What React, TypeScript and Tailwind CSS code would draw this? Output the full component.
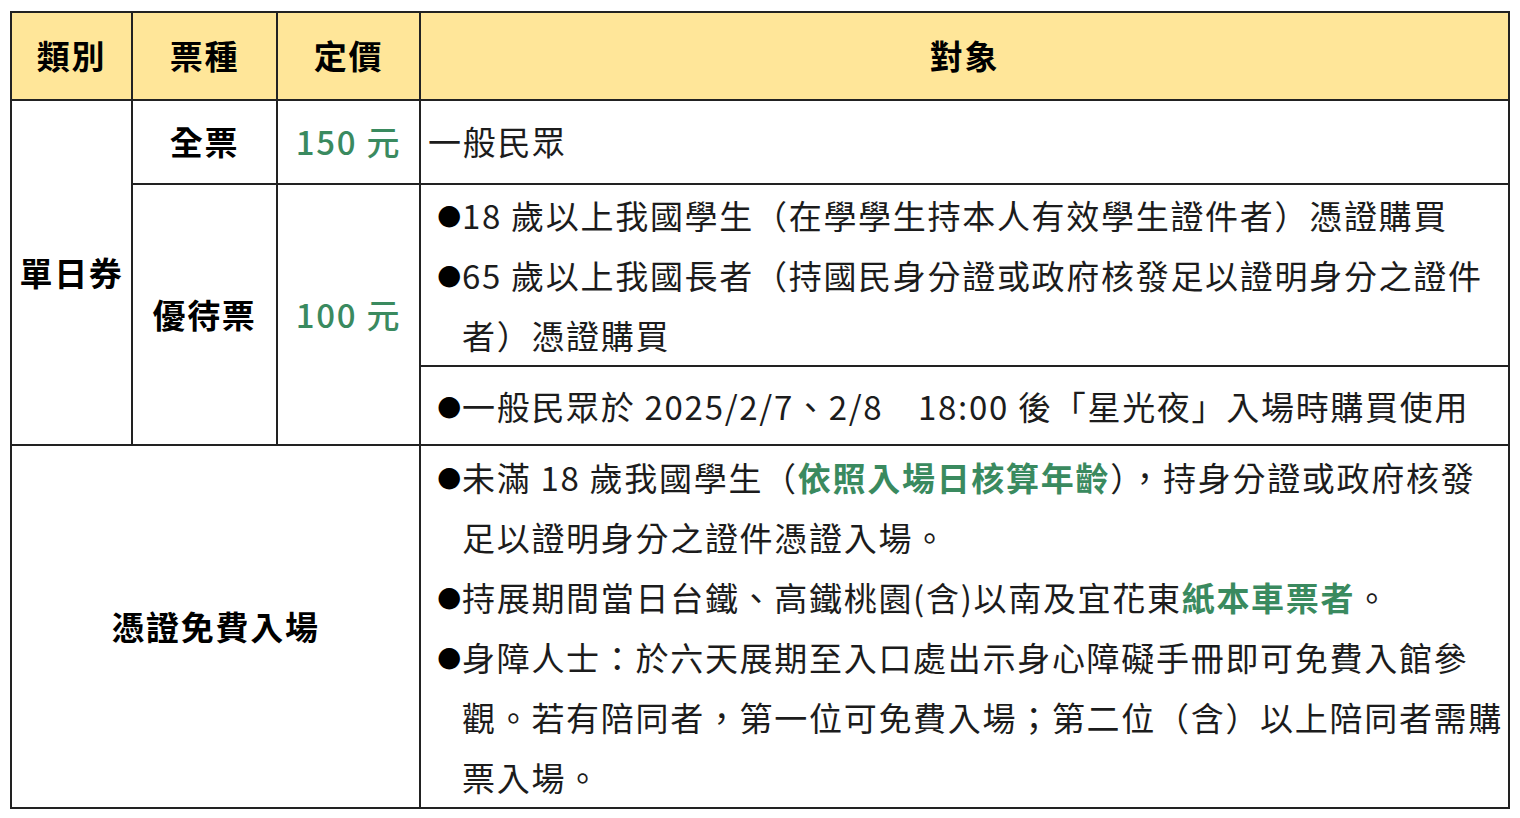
import type { ReactNode } from "react";

// Ticket price table
const green = "text-[#3a8a5f]";

const Bullet = () => (
  <span className="inline-block w-[25px] shrink-0 -ml-[2px] font-['DejaVu_Sans'] text-[28px] leading-[60px] text-black">
    ●
  </span>
);

const Item = ({ lines }: { lines: ReactNode[] }) => (
  <div className="flex">
    <Bullet />
    <div>
      {lines.map((line, i) => (
        <div key={i} className="whitespace-nowrap">
          {line}
        </div>
      ))}
    </div>
  </div>
);

const App = () => {
  const cell = "border-2 border-[#222]";
  const head = `${cell} bg-[#ffe699] text-center font-bold text-black`;
  const label = `${cell} text-center font-bold text-black`;
  const price = `${cell} text-center font-medium ${green}`;
  const body = `${cell} pl-[18px] align-middle leading-[60px] text-[#1c1c1c]`;

  return (
    <div className="min-h-screen bg-white pt-[11px] pl-[10px] font-['Noto_Sans_CJK_TC',sans-serif] text-[33px] tracking-[1.7px]">
      <table className="w-[1500px] table-fixed border-collapse">
        <colgroup>
          <col className="w-[121px]" />
          <col className="w-[145px]" />
          <col className="w-[143px]" />
          <col />
        </colgroup>
        <tbody>
          <tr className="h-[88px]">
            <td className={head}>類別</td>
            <td className={head}>票種</td>
            <td className={head}>定價</td>
            <td className={head}>對象</td>
          </tr>
          <tr className="h-[84px]">
            <td rowSpan={3} className={label}>
              單日券
            </td>
            <td className={label}>全票</td>
            <td className={price}>150 元</td>
            <td className={`${cell} pl-[7px] text-[#1c1c1c]`}>一般民眾</td>
          </tr>
          <tr className="h-[182px]">
            <td rowSpan={2} className={label}>
              優待票
            </td>
            <td rowSpan={2} className={price}>
              100 元
            </td>
            <td className={body}>
              <Item lines={["18 歲以上我國學生（在學學生持本人有效學生證件者）憑證購買"]} />
              <Item
                lines={[
                  "65 歲以上我國長者（持國民身分證或政府核發足以證明身分之證件",
                  "者）憑證購買",
                ]}
              />
            </td>
          </tr>
          <tr className="h-[79px]">
            <td className={body}>
              <Item lines={["一般民眾於 2025/2/7、2/8　18:00 後「星光夜」入場時購買使用"]} />
            </td>
          </tr>
          <tr className="h-[363px]">
            <td colSpan={3} className={label}>
              憑證免費入場
            </td>
            <td className={body}>
              <Item
                lines={[
                  <>
                    未滿 18 歲我國學生（
                    <span className={`font-bold ${green}`}>依照入場日核算年齡</span>
                    ），持身分證或政府核發
                  </>,
                  "足以證明身分之證件憑證入場。",
                ]}
              />
              <Item
                lines={[
                  <>
                    持展期間當日台鐵、高鐵桃園(含)以南及宜花東
                    <span className={`font-bold ${green}`}>紙本車票者</span>。
                  </>,
                ]}
              />
              <Item
                lines={[
                  "身障人士：於六天展期至入口處出示身心障礙手冊即可免費入館參",
                  "觀。若有陪同者，第一位可免費入場；第二位（含）以上陪同者需購",
                  "票入場。",
                ]}
              />
            </td>
          </tr>
        </tbody>
      </table>
    </div>
  );
};

export default App;
